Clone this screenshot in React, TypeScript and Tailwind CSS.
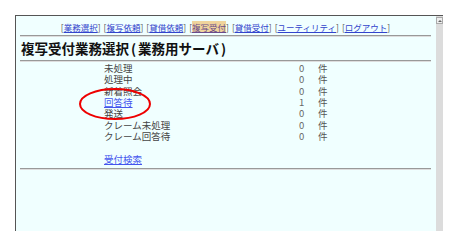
const navItems = [
  { label: "業務選択" },
  { label: "複写依頼" },
  { label: "貸借依頼" },
  { label: "複写受付", active: true },
  { label: "貸借受付" },
  { label: "ユーティリティ" },
  { label: "ログアウト" },
];

const rows = [
  { label: "未処理", count: 0 },
  { label: "処理中", count: 0 },
  { label: "新着照会", count: 0 },
  { label: "回答待", count: 1, link: true },
  { label: "発送", count: 0 },
  { label: "クレーム未処理", count: 0 },
  { label: "クレーム回答待", count: 0 },
];

export default function App() {
  return (
    <div
      className="relative h-[246px] w-[458px] overflow-hidden bg-white pl-[15px] pt-[15px]"
      style={{ fontFamily: '"Noto Sans CJK JP", "Noto Sans", sans-serif' }}
    >
      <div className="flex h-[216px] w-[428px] border-l border-t border-[#555]">
        <div className="flex-1 bg-[#f0ffff] px-[4px] pr-[5px]">
          {/* nav */}
          <div className="flex h-[10px] mt-[6px] items-center justify-center gap-[3px] text-[8.5px] leading-[10px]">
            {navItems.map((n) => (
              <span key={n.label} className="whitespace-nowrap text-[#555]">
                [
                <span
                  className={
                    n.active
                      ? "bg-[#f0d49c] text-[#6a4a8a] underline"
                      : "text-[#3344cc] underline"
                  }
                >
                  {n.label}
                </span>
                ]
              </span>
            ))}
          </div>
          <div className="mt-[3px] h-[2px] border-t border-[#999] bg-[#ddd]" />
          <div className="pl-[1px] pt-[2px] text-[13.5px] font-bold leading-[19px] text-[#111]">
            複写受付業務選択<span className="mx-[2px]">(</span>業務用サーバ<span className="ml-[2px]">)</span>
          </div>
          <div className="mt-[2px] h-[2px] border-t border-[#999] bg-[#ddd]" />
          <div className="pt-[1px] text-[9.5px] leading-[11px]">
            {rows.map((r) => (
              <div key={r.label} className="flex h-[11.3px] items-center">
                <div className="w-[279px] pl-[84px]">
                  {r.link ? (
                    <span className="text-[#4455ee] underline">{r.label}</span>
                  ) : (
                    <span className="text-[#444]">{r.label}</span>
                  )}
                </div>
                <div className="w-[19px] text-[#666]">{r.count}</div>
                <div className="text-[#555]">件</div>
              </div>
            ))}
            <div className="h-[11.3px]" />
            <div className="flex h-[11.3px] items-center pl-[84px]">
              <span className="text-[#4455ee] underline">受付検索</span>
            </div>
          </div>
          <div className="mt-[3px] h-[2px] border-t border-[#999] bg-[#ddd]" />
        </div>
        <div className="w-[7px] bg-[#dcdcdc]">
          <div className="mt-[1px] flex h-[7px] w-[7px] items-center justify-center border border-[#aaa] bg-[#eee]">
            <div className="h-0 w-0 border-x-[2px] border-b-[2px] border-x-transparent border-b-[#666]" />
          </div>
        </div>
      </div>
      <svg
        className="pointer-events-none absolute left-0 top-0"
        width="458"
        height="246"
      >
        <ellipse cx="115" cy="104" rx="35" ry="15" fill="none" stroke="#e00" strokeWidth="2" />
      </svg>
    </div>
  );
}
